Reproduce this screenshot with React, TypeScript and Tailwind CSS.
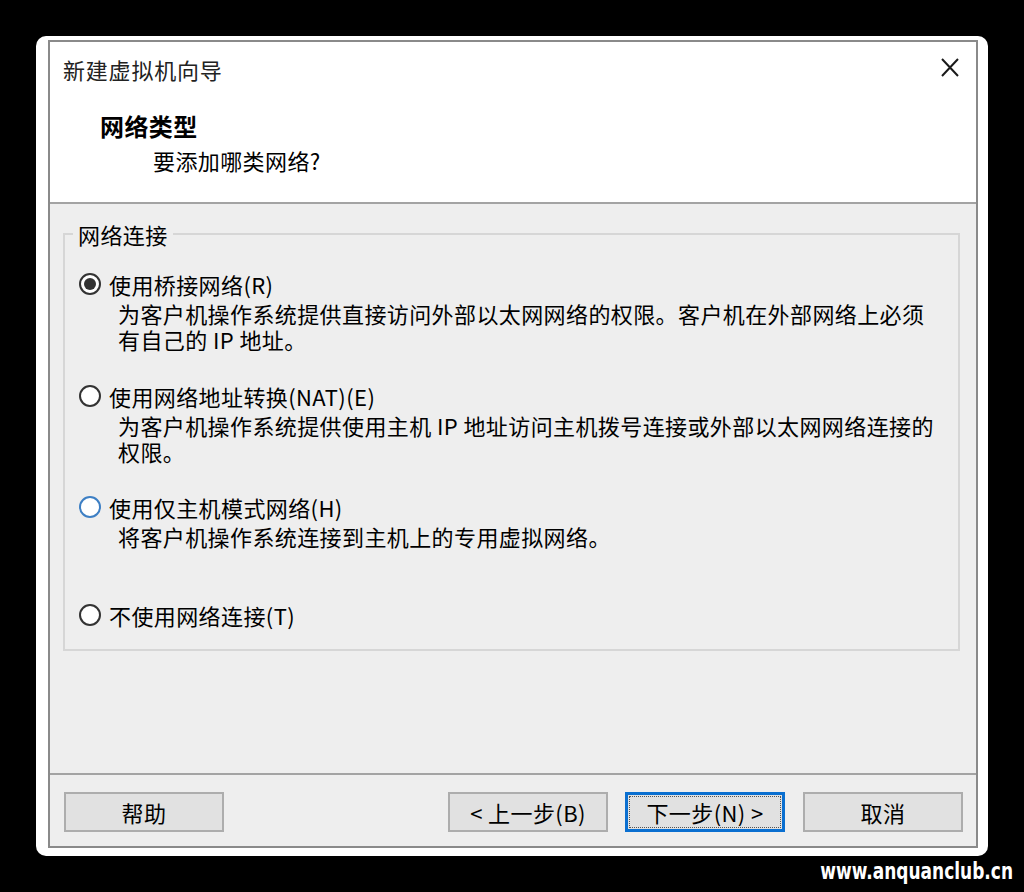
import { ReactNode } from "react";

const cjk = {
  fontFamily: '"Noto Sans CJK SC", "Noto Sans", sans-serif',
};

type Option = {
  label: string;
  lines: string[];
  checked?: boolean;
  hover?: boolean;
  gap: string;
};

const options: Option[] = [
  {
    label: "使用桥接网络(R)",
    lines: [
      "为客户机操作系统提供直接访问外部以太网网络的权限。客户机在外部网络上必须",
      "有自己的 IP 地址。",
    ],
    checked: true,
    gap: "mt-[23px]",
  },
  {
    label: "使用网络地址转换(NAT)(E)",
    lines: [
      "为客户机操作系统提供使用主机 IP 地址访问主机拨号连接或外部以太网网络连接的",
      "权限。",
    ],
    gap: "mt-[30px]",
  },
  {
    label: "使用仅主机模式网络(H)",
    lines: ["将客户机操作系统连接到主机上的专用虚拟网络。"],
    hover: true,
    gap: "mt-[29px]",
  },
  {
    label: "不使用网络连接(T)",
    lines: [],
    gap: "mt-[52px]",
  },
];

function Radio({ checked, hover }: { checked?: boolean; hover?: boolean }) {
  return (
    <span
      className={
        "flex h-[22px] w-[22px] shrink-0 items-center justify-center rounded-full border-2 bg-white " +
        (hover ? "border-[#3d7fc4]" : "border-[#333333]")
      }
    >
      {checked && <span className="h-[12px] w-[12px] rounded-full bg-[#333333]" />}
    </span>
  );
}

function RadioRow({ opt }: { opt: Option }) {
  return (
    <div className={opt.gap}>
      <div className="flex h-[28px] items-center gap-[8px] leading-[28px]">
        <Radio checked={opt.checked} hover={opt.hover} />
        <span>{opt.label}</span>
      </div>
      {opt.lines.length > 0 && (
        <div className="mt-[2px] pl-[39px] leading-[26px]">
          {opt.lines.map((l) => (
            <div key={l} className="h-[26px] overflow-visible whitespace-nowrap">
              {l}
            </div>
          ))}
        </div>
      )}
    </div>
  );
}

function Button({ children, focused }: { children: ReactNode; focused?: boolean }) {
  return (
    <button
      className={
        "flex h-[40px] w-[160px] items-center justify-center bg-[#e1e1e1] text-[22px] text-black " +
        (focused ? "border-[3px] border-[#0a6fd0] p-[1px]" : "border-2 border-[#adadad]")
      }
    >
      {focused ? (
        <span className="flex h-full w-full items-center justify-center border border-dotted border-[#555555]">
          {children}
        </span>
      ) : (
        children
      )}
    </button>
  );
}

export default function App() {
  return (
    <div className="flex h-[892px] w-[1024px] flex-col bg-black" style={cjk}>
      <div className="ml-[36px] mt-[36px] h-[820px] w-[952px] rounded-[10px] bg-white pb-[8px] pl-[12px] pr-[10px] pt-[4px]">
        <div className="flex h-full flex-col border-2 border-[#8a8a8a] bg-[#eeeeee] text-[22px] tracking-[0.4px] text-black">
          {/* wizard header */}
          <div className="relative h-[162px] shrink-0 border-b-2 border-[#a3a3a3] bg-white pl-[13px] pt-[12px]">
            <div className="leading-[30px] tracking-[0.8px] text-[#222222]">新建虚拟机向导</div>
            <div className="ml-[37px] mt-[27px] text-[24px] font-bold leading-[30px] tracking-[0.4px]">网络类型</div>
            <div className="ml-[90px] mt-[4px] leading-[30px]">要添加哪类网络?</div>
            <button className="absolute right-[17px] top-[16px] h-[19px] w-[18px]">
              <svg viewBox="0 0 18 19" className="h-[19px] w-[18px]" fill="none" stroke="#1a1a1a" strokeWidth="2">
                <path d="M1 1 L17 18 M17 1 L1 18" />
              </svg>
            </button>
          </div>

          {/* network type group */}
          <div className="flex-1 pt-[17px]">
            <fieldset className="ml-[13px] h-[430px] w-[897px] border-2 border-[#d6d6d6] px-[8px]">
              <legend className="px-[5px] leading-[26px]">网络连接</legend>
              <div className="pl-[6px]">
                {options.map((o) => (
                  <RadioRow key={o.label} opt={o} />
                ))}
              </div>
            </fieldset>
          </div>

          {/* footer buttons */}
          <div className="flex h-[73px] shrink-0 items-start border-t-2 border-[#a3a3a3] pl-[14px] pr-[13px] pt-[17px]">
            <Button>帮助</Button>
            <div className="ml-auto flex gap-[17px]">
              <Button>&lt; 上一步(B)</Button>
              <Button focused>下一步(N) &gt;</Button>
            </div>
            <div className="ml-[18px]">
              <Button>取消</Button>
            </div>
          </div>
        </div>
      </div>
      <div className="flex justify-end pr-[11px]">
        <span
          className="mt-[3px] inline-block origin-center scale-y-[1.3] text-[17px] font-bold leading-[24px] text-white"
          style={{ fontFamily: '"DejaVu Sans", sans-serif' }}
        >
          www.anquanclub.cn
        </span>
      </div>
    </div>
  );
}
